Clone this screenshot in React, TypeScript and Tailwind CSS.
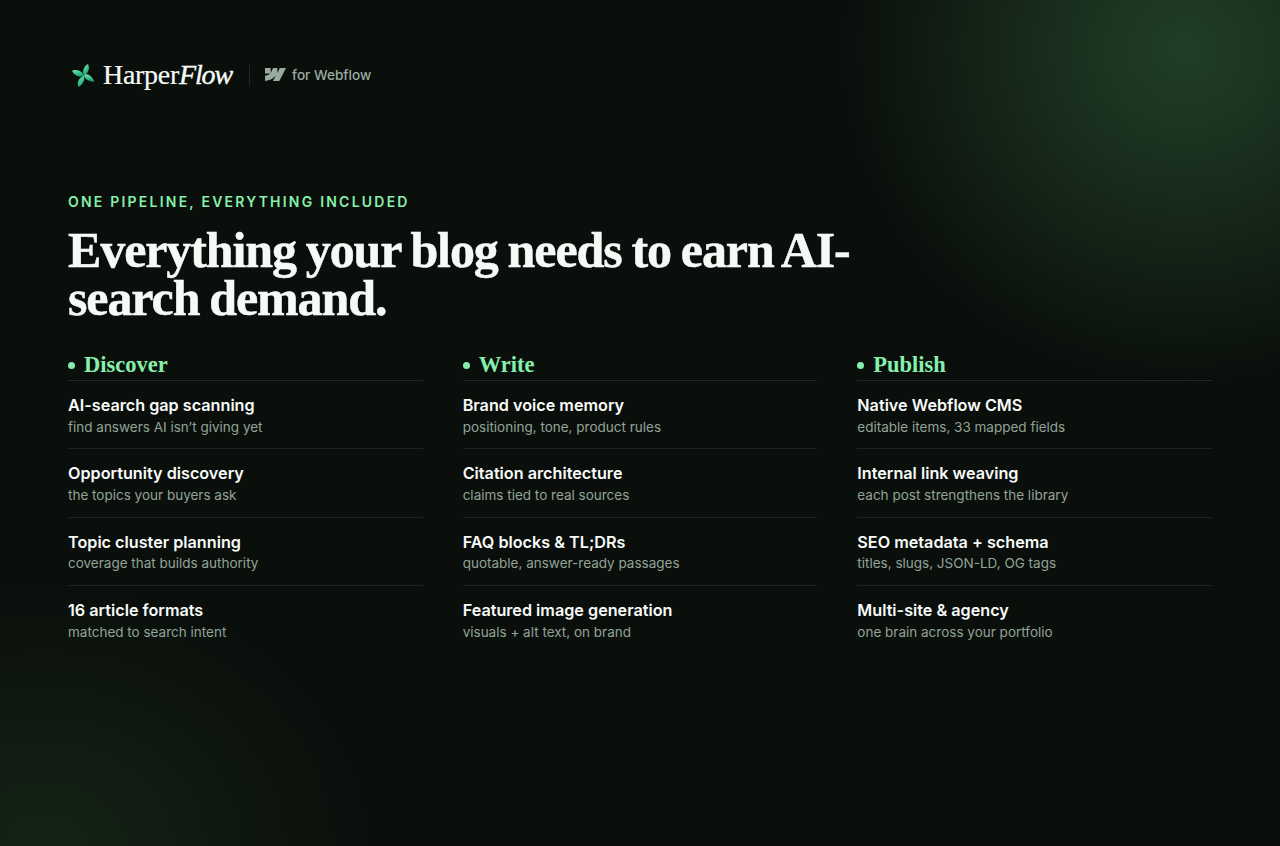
const columns = [
  {
    title: 'Discover',
    items: [
      ['AI-search gap scanning', 'find answers AI isn’t giving yet'],
      ['Opportunity discovery', 'the topics your buyers ask'],
      ['Topic cluster planning', 'coverage that builds authority'],
      ['16 article formats', 'matched to search intent'],
    ],
  },
  {
    title: 'Write',
    items: [
      ['Brand voice memory', 'positioning, tone, product rules'],
      ['Citation architecture', 'claims tied to real sources'],
      ['FAQ blocks & TL;DRs', 'quotable, answer-ready passages'],
      ['Featured image generation', 'visuals + alt text, on brand'],
    ],
  },
  {
    title: 'Publish',
    items: [
      ['Native Webflow CMS', 'editable items, 33 mapped fields'],
      ['Internal link weaving', 'each post strengthens the library'],
      ['SEO metadata + schema', 'titles, slugs, JSON-LD, OG tags'],
      ['Multi-site & agency', 'one brain across your portfolio'],
    ],
  },
];

const Logo = () => (
  <svg width="28" height="28" viewBox="0 0 28 28" className="shrink-0">
    <defs>
      <linearGradient id="leaf" x1="0.1" y1="0" x2="0.5" y2="1">
        <stop offset="0" stopColor="#74eda0" />
        <stop offset="1" stopColor="#12a07c" />
      </linearGradient>
    </defs>
    <g fill="url(#leaf)">
      <path d="M16 14.500C13.800 11 15.500 5.500 20 3C22 7 20.500 12.500 16 14.500Z" />
      <path d="M16 14.500C18.800 11.800 23 13.500 26.500 20.500C21.500 20.800 17.300 18.500 16 14.500Z" />
      <path d="M16 14.500C17.300 18.500 15 23.500 10.500 26C8.500 21.500 11 16.500 16 14.500Z" />
      <path d="M16 14.500C12.500 16.800 6.500 15.500 4 9.500C9 7.800 14 10 16 14.500Z" />
    </g>
  </svg>
);

const WebflowMark = () => (
  <svg width="21" height="13" viewBox="0 0 21 13" className="shrink-0">
    <path d="M21 0L14.300 13H8L10.800 7.600C8.500 10.600 5.100 12.600 0 13V7.700C0 7.700 3.200 7.500 5.100 5.500H0V0H5.700V4.700L5.800 4.700L8.100 0H12.400V4.700L12.500 4.700L14.900 0H21Z" fill="#9aaba1" />
  </svg>
);

export default function App() {
  return (
    <div className="h-[846px] overflow-hidden bg-[#0a0f0b] bg-[radial-gradient(ellipse_340px_330px_at_1185px_50px,rgba(33,62,38,1),rgba(31,58,36,0.75)_35%,rgba(10,15,11,0)_100%),radial-gradient(ellipse_320px_260px_at_45px_846px,rgba(23,40,24,0.8),rgba(10,15,11,0)_100%)] px-[68px] font-['Inter','Liberation_Sans',sans-serif]">
      <header className="flex h-[150px] items-start pt-[60px]">
        <div className="flex items-center">
          <Logo />
          <span className="ml-[7px] font-['Liberation_Serif',serif] text-[28px] leading-[30px] tracking-[-0.3px] text-[#f5faf6] [-webkit-text-stroke:0.2px_#f5faf6]">
            Harper<em className="italic tracking-[-1.100px] [-webkit-text-stroke:0.4px_#f5faf6]">Flow</em>
          </span>
          <div className="ml-[17px] h-[20px] w-px bg-[#222a25]" />
          <div className="ml-[15px] flex items-center gap-[6px]">
            <WebflowMark />
            <span className="text-[13.600px] font-medium text-[#9aaba1]">for Webflow</span>
          </div>
        </div>
      </header>

      <p className="mt-[43px] text-sm leading-[17px] font-semibold tracking-[2.220px] text-[#86efac]">
        ONE PIPELINE, EVERYTHING INCLUDED
      </p>
      <h1 className="mt-[16px] w-[800px] font-['Liberation_Serif',serif] text-[50px] leading-[48px] font-bold tracking-[-1.100px] [word-spacing:-1.500px] text-[#f5faf6] [-webkit-text-stroke:0.5px_#f5faf6]">
        Everything your blog needs to earn AI-search demand.
      </h1>

      <div className="mt-[26px] grid w-[1144px] grid-cols-3 gap-x-[40px]">
        {columns.map((col) => (
          <section key={col.title}>
            <h2 className="flex h-[33px] items-center gap-[9px] border-b border-[#232925] pt-[2px] font-['Liberation_Serif',serif] text-[22.500px] font-bold text-[#86efac]">
              <span className="h-[7px] w-[7px] rounded-full bg-[#86efac]" />
              {col.title}
            </h2>
            {col.items.map(([name, hint], i) => (
              <div
                key={name}
                className={`h-[68.400px] pt-[13px] ${i < 3 ? 'border-b border-[#1c221e]' : ''}`}
              >
                <div className="text-[16.200px] leading-[22px] font-semibold text-[#f8fbf9]">{name}</div>
                <div className="mt-[0.600px] text-[13.500px] leading-[20px] text-[#93a399]">{hint}</div>
              </div>
            ))}
          </section>
        ))}
      </div>
    </div>
  );
}
